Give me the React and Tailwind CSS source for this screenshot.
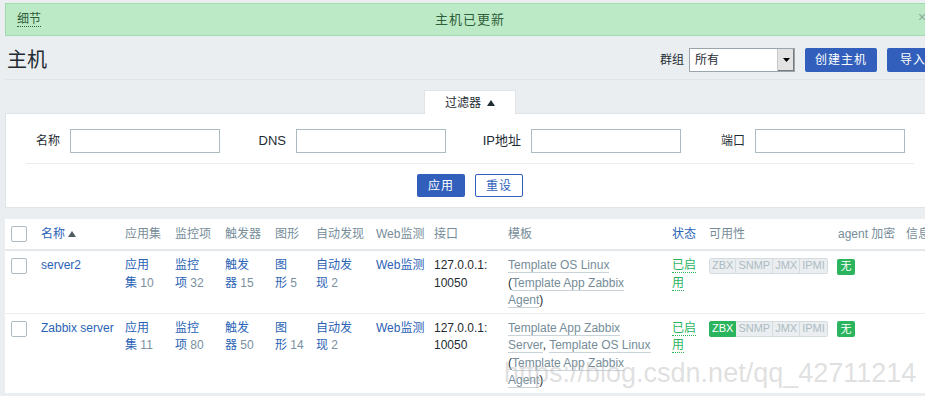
import React from "react";

const FONT = { fontFamily: '"Liberation Sans", Arial, "Noto Sans CJK SC", sans-serif' };

const cols = "grid grid-cols-[30px_84px_50px_50px_50px_41px_60px_58px_74px_164px_37px_129px_68px_1fr]";

function Checkbox() {
  return <div className="w-[16px] h-[16px] border border-[#acbbc2] rounded-[2px] bg-white" />;
}

function TLink({ children }) {
  return <span className="text-[#768d99] border-b border-[#c9d3d8]">{children}</span>;
}

function Avail({ zbx }) {
  const base = "h-[16px] px-[2px] flex items-center text-[11px] border";
  const off = " bg-[#ebeef0] border-[#d5dce0] text-[#acbbc2]";
  return (
    <div className="flex">
      <span className={zbx ? base + " bg-[#2bb45e] border-[#2bb45e] text-white rounded-l-[2px]" : base + off + " rounded-l-[2px]"}>ZBX</span>
      <span className={base + off + " border-l-0"}>SNMP</span>
      <span className={base + off + " border-l-0"}>JMX</span>
      <span className={base + off + " border-l-0 rounded-r-[2px]"}>IPMI</span>
    </div>
  );
}

function Status() {
  return (
    <div className="text-[#2bb45e] leading-[17.5px]">
      <span className="border-b border-dotted border-[#2bb45e]">已启</span>
      <br />
      <span className="border-b border-dotted border-[#2bb45e]">用</span>
    </div>
  );
}

function Num({ children }) {
  return <span className="text-[#7a8fa0]">{children}</span>;
}

function Row({ name, a, b, c, d, e, template, zbx }) {
  const link = "text-[#2a62b5]";
  return (
    <div className={cols + " border-b border-[#ebeef0] pt-[6px] pb-[3px] leading-[17.5px] text-[12px]"}>
      <div className="pl-[6px] pt-[1px]"><Checkbox /></div>
      <div className={"pl-[6px] " + link}>{name}</div>
      <div className={"pl-[6px] " + link}>应用<br />集 <Num>{a}</Num></div>
      <div className={"pl-[6px] " + link}>监控<br />项 <Num>{b}</Num></div>
      <div className={"pl-[6px] " + link}>触发<br />器 <Num>{c}</Num></div>
      <div className={"pl-[6px] " + link}>图<br />形 <Num>{d}</Num></div>
      <div className={"pl-[6px] " + link}>自动发<br />现 <Num>{e}</Num></div>
      <div className={"pl-[6px] " + link}>Web监测</div>
      <div className="pl-[6px] text-[#1f2c33]">127.0.0.1:<br />10050</div>
      <div className="pl-[6px] text-[#1f2c33]">{template}</div>
      <div className="pl-[6px]"><Status /></div>
      <div className="pl-[6px] pt-[1px]"><Avail zbx={zbx} /></div>
      <div className="pl-[5px] pt-[1px]">
        <span className="inline-flex h-[16px] w-[18px] items-center justify-center bg-[#2bb45e] text-white text-[11px] rounded-[2px]">无</span>
      </div>
      <div />
    </div>
  );
}

export default function App() {
  return (
    <div className="w-[925px] h-[396px] overflow-hidden bg-[#ebeef0] relative text-[12px]" style={FONT}>
      <div className="w-[930px] ml-[5px]">
        {/* message bar */}
        <div className="mt-[3px] h-[33px] bg-[#bdeac6] border border-[#a3dbb0] relative flex items-center justify-center text-[#2f5e3a]">
          <span className="absolute left-[11px] top-[8px] border-b border-dotted border-[#2f5e3a] leading-[14px]">细节</span>
          <span className="text-[13px] tracking-[1px]">主机已更新</span>
          <span className="absolute left-[912px] top-[3px] text-[#8aa897] text-[14px]">×</span>
        </div>

        {/* header */}
        <div className="flex items-start pt-[12px] pb-[7px] border-b border-[#dfe4e7]">
          <div className="pl-[2px] text-[20px] text-[#1f2c33] leading-[24px]">主机</div>
          <div className="ml-auto flex items-center">
            <span className="text-[#1f2c33] mr-[5px]">群组</span>
            <div className="w-[106px] h-[24px] bg-white border border-[#9aa5ab] flex items-center">
              <span className="pl-[5px] text-[#1f2c33] flex-1">所有</span>
              <div className="w-[17px] h-[22px] bg-[#e3e3e3] border-l border-[#c8c8c8] shadow-[inset_-1px_-1px_0_#7a7a7a] flex items-center justify-center">
                <svg width="7" height="4" viewBox="0 0 7 4"><path d="M0 0H7L3.5 4Z" fill="#000" /></svg>
              </div>
            </div>
            <button className="ml-[10px] w-[72px] h-[24px] bg-[#315fbb] text-white rounded-[2px] text-[12px] tracking-[1px]">创建主机</button>
            <button className="ml-[10px] w-[48px] h-[24px] bg-[#315fbb] text-white rounded-[2px] text-[12px] text-left pl-[13px] tracking-[1px]">导入</button>
          </div>
        </div>

        {/* filter tab */}
        <div className="mt-[10px] flex justify-center">
          <div className="w-[92px] h-[24px] bg-white border-t border-x border-[#dfe4e7] flex items-center justify-center text-[#1f2c33] -mb-px relative z-10">
            过滤器
            <svg className="ml-[6px]" width="8" height="6" viewBox="0 0 8 6"><path d="M0 6H8L4 0Z" fill="#1f2c33" /></svg>
          </div>
        </div>
        <div className="bg-white border border-[#dfe4e7] h-[95px] pt-[15px]">
          <div className="flex items-center text-[#1f2c33]">
            <span className="w-[40px] ml-[14px] text-right">名称</span>
            <input className="ml-[10px] w-[150px] h-[24px] border border-[#acbbc2] bg-white" />
            <span className="w-[40px] ml-[26px] text-right text-[13px]">DNS</span>
            <input className="ml-[10px] w-[150px] h-[24px] border border-[#acbbc2] bg-white" />
            <span className="w-[41px] ml-[34px] text-right text-[13px]">IP地址</span>
            <input className="ml-[10px] w-[150px] h-[24px] border border-[#acbbc2] bg-white" />
            <span className="w-[40px] ml-[24px] text-right">端口</span>
            <input className="ml-[10px] w-[150px] h-[24px] border border-[#acbbc2] bg-white" />
          </div>
          <div className="mx-[20px] mt-[10px] border-t border-[#ebeef0]" />
          <div className="mt-[10px] flex justify-center gap-[10px]">
            <button className="w-[48px] h-[23px] bg-[#315fbb] text-white rounded-[2px] text-[12px] tracking-[1px]">应用</button>
            <button className="w-[48px] h-[23px] bg-white text-[#315fbb] border border-[#315fbb] rounded-[2px] text-[12px] tracking-[1px]">重设</button>
          </div>
        </div>

        {/* table */}
        <div className="mt-[11px] bg-white">
          <div className={cols + " h-[32px] items-center border-b-[2px] border-[#e4e8eb] text-[#768d99]"}>
            <div className="pl-[6px]"><Checkbox /></div>
            <div className="pl-[6px] text-[#2a62b5] flex items-center">名称<svg className="ml-[3px]" width="8" height="6" viewBox="0 0 8 6"><path d="M0 6H8L4 0Z" fill="#4f5b62" /></svg></div>
            <div className="pl-[6px]">应用集</div>
            <div className="pl-[6px]">监控项</div>
            <div className="pl-[6px]">触发器</div>
            <div className="pl-[6px]">图形</div>
            <div className="pl-[6px]">自动发现</div>
            <div className="pl-[6px]">Web监测</div>
            <div className="pl-[6px]">接口</div>
            <div className="pl-[6px]">模板</div>
            <div className="pl-[6px] text-[#2a62b5]">状态</div>
            <div className="pl-[6px]">可用性</div>
            <div className="pl-[6px] whitespace-nowrap">agent 加密</div>
            <div className="pl-[6px] whitespace-nowrap">信息</div>
          </div>
          <Row
            name="server2" a="10" b="32" c="15" d="5" e="2" zbx={false}
            template={<><TLink>Template OS Linux</TLink><br />(<TLink>Template App Zabbix</TLink><br /><TLink>Agent</TLink>)</>}
          />
          <Row
            name="Zabbix server" a="11" b="80" c="50" d="14" e="2" zbx={true}
            template={<><TLink>Template App Zabbix</TLink><br /><TLink>Server</TLink>, <TLink>Template OS Linux</TLink><br />(<TLink>Template App Zabbix</TLink><br /><TLink>Agent</TLink>)</>}
          />
        </div>
      </div>

      <div className="absolute left-[504px] top-[360px] text-[27px] leading-[27px] text-[rgba(185,185,185,0.45)] whitespace-nowrap pointer-events-none">
        https://blog.csdn.net/qq_42711214
      </div>
    </div>
  );
}
